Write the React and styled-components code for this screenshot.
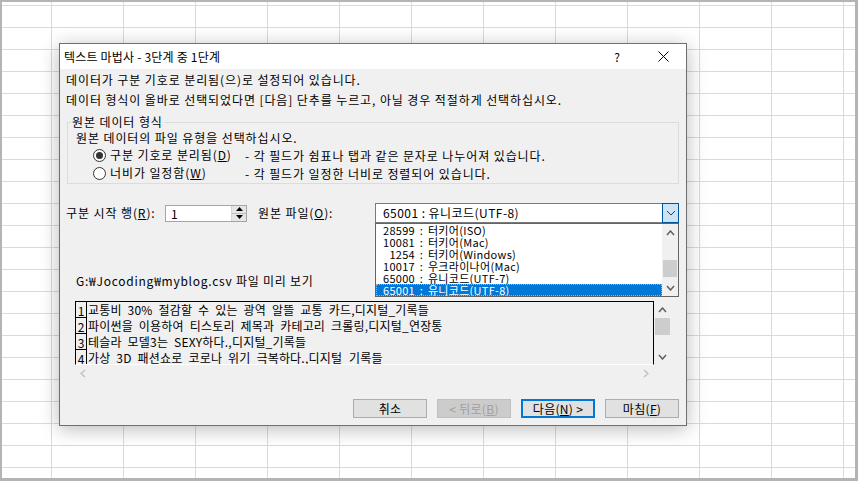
import styled, { createGlobalStyle } from "styled-components";

const GlobalStyle = createGlobalStyle`
  html, body {
    margin: 0;
    padding: 0;
  }
  body {
    font-family: "Noto Sans CJK KR", "Noto Sans", sans-serif;
    font-size: 12px;
    color: #000;
  }
  * {
    box-sizing: border-box;
  }
`

const Screen = styled.div`
  position: relative;
  width: 858px;
  height: 481px;
  overflow: hidden;
  border-style: solid;
  border-color: #b4b4b4;
  border-width: 2px 3px 3px 2px;
  background-color: #fff;
  background-image: linear-gradient(to right, #dadada 1px, transparent 1px),
    linear-gradient(to bottom, #dadada 1px, transparent 1px);
  background-size: 72px 100%, 100% 22px;
  background-position: 49px 0, 0 3px;
`

const Dialog = styled.div`
  position: absolute;
  left: 57px;
  top: 41px;
  width: 628px;
  height: 383px;
  border: 1px solid #6f6f6f;
  background: #f0f0f0;
  box-shadow: 0 3px 18px rgba(0, 0, 0, 0.28);
  display: flex;
  flex-direction: column;
`

const TitleBar = styled.div`
  height: 25px;
  flex-shrink: 0;
  background: #fff;
  display: flex;
  align-items: center;
  padding-left: 4px;
`

const Title = styled.div`
  flex: 1;
  line-height: 16px;
  letter-spacing: 0.2px;
`

const TitleButton = styled.div`
  width: 46px;
  height: 25px;
  display: flex;
  align-items: center;
  justify-content: center;
  font-size: 12px;
`

const Body = styled.div`
  flex: 1;
  display: flex;
  flex-direction: column;
  padding: 1px 7px 0 6px;
  letter-spacing: 0.9px;
`

const Line = styled.div`
  line-height: 20px;
  white-space: nowrap;
`

const Group = styled.fieldset`
  margin: 4px 0 0 1px;
  width: 612px;
  min-width: 0;
  padding: 0 8px 1px 8px;
  border: 1px solid #dcdcdc;
`

const Legend = styled.legend`
  margin-left: -5px;
  padding: 0 1px;
  line-height: 16px;
`

const GroupText = styled.div`
  line-height: 16px;
`

const RadioRow = styled.div`
  display: flex;
  align-items: center;
  height: 18px;
  padding-left: 17px;
  white-space: nowrap;
`

const Radio = styled.span`
  position: relative;
  width: 13px;
  height: 13px;
  border-radius: 50%;
  border: 1px solid #333;
  background: #fff;
  margin-right: 4px;
  flex-shrink: 0;
  &::after {
    content: "";
    display: ${(p) => (p.$checked ? "block" : "none")};
    position: absolute;
    left: 2px;
    top: 2px;
    width: 7px;
    height: 7px;
    border-radius: 50%;
    background: #333;
  }
`

const RadioLabel = styled.span`
  width: 135px;
  line-height: 16px;
`

const OptionsRow = styled.div`
  display: flex;
  align-items: center;
  height: 20px;
  margin-top: 19px;
  white-space: nowrap;
`

const FieldLabel = styled.span`
  width: ${(p) => p.$width}px;
  margin-left: ${(p) => p.$offset || 0}px;
  line-height: 16px;
`

const Spin = styled.div`
  width: 82px;
  height: 17px;
  border: 1px solid #a5a5a5;
  background: #fff;
  display: flex;
  align-items: stretch;
`

const SpinValue = styled.div`
  flex: 1;
  padding-left: 5px;
  line-height: 15px;
`

const SpinButtons = styled.div`
  width: 15px;
  display: flex;
  flex-direction: column;
  background: #e6e6e6;
  border-left: 1px solid #d4d4d4;
`

const SpinButton = styled.div`
  flex: 1;
  display: flex;
  align-items: center;
  justify-content: center;
  & + & {
    border-top: 1px solid #bdbdbd;
  }
`

const Combo = styled.div`
  position: relative;
  width: 304px;
  height: 20px;
  border: 1px solid #7a7a7a;
  background: #fff;
  display: flex;
  align-items: stretch;
`

const ComboValue = styled.div`
  flex: 1;
  padding-left: 7px;
  line-height: 18px;
  letter-spacing: 0.45px;
`

const DropButton = styled.div`
  width: 17px;
  margin: -1px -1px -1px 0;
  border: 1px solid #005499;
  background: #cce4f7;
  display: flex;
  align-items: center;
  justify-content: center;
`

const DropList = styled.div`
  position: absolute;
  left: -1px;
  top: 19px;
  width: 304px;
  height: 74px;
  border: 1px solid #646464;
  background: #fff;
  display: flex;
  z-index: 2;
`

const ListItems = styled.div`
  flex: 1;
  display: flex;
  flex-direction: column;
  overflow: hidden;
`

const ListItem = styled.div`
  height: 12px;
  line-height: 12px;
  padding-left: 7px;
  font-size: 11px;
  white-space: pre;
  letter-spacing: 0.3px;
  word-spacing: 2px;
  color: ${(p) => (p.$selected ? "#fff" : "#000")};
  background: ${(p) => (p.$selected ? "#0078d7" : "transparent")};
  outline: ${(p) => (p.$selected ? "1px dotted #f29a5c" : "none")};
  outline-offset: -1px;
`

const VScroll = styled.div`
  width: ${(p) => p.$width || 16}px;
  background: #f0f0f0;
  display: flex;
  flex-direction: column;
  align-items: center;
`

const ScrollArrow = styled.div`
  height: ${(p) => p.$height || 16}px;
  width: 100%;
  display: flex;
  align-items: center;
  justify-content: center;
  flex-shrink: 0;
`

const ScrollTrack = styled.div`
  flex: 1;
  width: 100%;
  padding-top: ${(p) => p.$thumbTop}px;
`

const Thumb = styled.div`
  height: ${(p) => p.$height}px;
  margin: 0 1px;
  background: #cdcdcd;
`

const PreviewLabel = styled.div`
  margin-top: 50px;
  padding-left: 10px;
  line-height: 16px;
  letter-spacing: 0.75px;
`

const Preview = styled.div`
  margin: 12px 0 0 9px;
  display: grid;
  grid-template-columns: 579px 17px;
  grid-template-rows: 64px 16px;
  width: 596px;
  letter-spacing: 0;
`

const PreviewFrame = styled.div`
  border-top: 1px solid #000;
  border-left: 1px solid #000;
  border-right: 1px solid #000;
  border-bottom: 1px solid #fff;
  overflow: hidden;
`

const PreviewRow = styled.div`
  display: flex;
  height: 16px;
  white-space: nowrap;
`

const RowNumber = styled.div`
  width: 11px;
  flex-shrink: 0;
  border-right: 1px solid #000;
  border-bottom: 1px solid #000;
  text-align: center;
  line-height: 17px;
  font-size: 12px;
`

const RowText = styled.div`
  padding-left: 1px;
  line-height: 16px;
  letter-spacing: 0.2px;
  word-spacing: 3px;
`

const HScroll = styled.div`
  display: flex;
  justify-content: space-between;
  align-items: center;
`

const HArrow = styled.div`
  width: 16px;
  height: 16px;
  display: flex;
  align-items: center;
  justify-content: center;
`

const ButtonRow = styled.div`
  display: flex;
  justify-content: flex-end;
  gap: 10px;
  margin-top: 18px;
`

const Button = styled.div`
  width: 74px;
  height: 19px;
  display: flex;
  align-items: center;
  justify-content: center;
  letter-spacing: 0.3px;
  background: ${(p) => (p.$disabled ? "#cccccc" : "#e1e1e1")};
  color: ${(p) => (p.$disabled ? "#a0a0a0" : "#000")};
  border: ${(p) =>
    p.$default
      ? "2px solid #0078d7"
      : p.$disabled
      ? "1px solid #bfbfbf"
      : "1px solid #adadad"};
  white-space: pre;
`

const Chevron = ({ dir = "down", color = "#606060", w = 9, h = 6, sw = 1.5 }) => {
  const paths = {
    up: `M1 ${h - 1} L${w / 2} 1 L${w - 1} ${h - 1}`,
    down: `M1 1 L${w / 2} ${h - 1} L${w - 1} 1`,
    left: `M${w - 1} 1 L1 ${h / 2} L${w - 1} ${h - 1}`,
    right: `M1 1 L${w - 1} ${h / 2} L1 ${h - 1}`,
  };
  return (
    <svg width={w} height={h} viewBox={`0 0 ${w} ${h}`}>
      <path d={paths[dir]} fill="none" stroke={color} strokeWidth={sw} />
    </svg>
  );
};

const Triangle = ({ up }) => (
  <svg width="7" height="4" viewBox="0 0 7 4">
    <path d={up ? "M0 4 L3.5 0 L7 4 Z" : "M0 0 L3.5 4 L7 0 Z"} fill="#000" />
  </svg>
);

const encodings = [
  { label: "28599 : 터키어(ISO)" },
  { label: "10081 : 터키어(Mac)" },
  { label: "\u20071254 : 터키어(Windows)" },
  { label: "10017 : 우크라이나어(Mac)" },
  { label: "65000 : 유니코드(UTF-7)" },
  { label: "65001 : 유니코드(UTF-8)", selected: true },
];

const rows = [
  "교통비 30% 절감할 수 있는 광역 알뜰 교통 카드,디지털_기록들",
  "파이썬을 이용하여 티스토리 제목과 카테고리 크롤링,디지털_연장통",
  "테슬라 모델3는 SEXY하다.,디지털_기록들",
  "가상 3D 패션쇼로 코로나 위기 극복하다.,디지털_기록들",
];

export default function App() {
  return (
    <>
      <GlobalStyle />
      <Screen>
        <Dialog>
          <TitleBar>
            <Title>텍스트 마법사 - 3단계 중 1단계</Title>
            <TitleButton>?</TitleButton>
            <TitleButton>
              <svg width="11" height="11" viewBox="0 0 11 11">
                <path d="M0.5 0.5 L10.5 10.5 M10.5 0.5 L0.5 10.5" stroke="#000" strokeWidth="1" />
              </svg>
            </TitleButton>
          </TitleBar>
          <Body>
            <Line>데이터가 구분 기호로 분리됨(으)로 설정되어 있습니다.</Line>
            <Line>데이터 형식이 올바로 선택되었다면 [다음] 단추를 누르고, 아닐 경우 적절하게 선택하십시오.</Line>
            <Group>
              <Legend>원본 데이터 형식</Legend>
              <GroupText>원본 데이터의 파일 유형을 선택하십시오.</GroupText>
              <RadioRow>
                <Radio $checked />
                <RadioLabel>
                  구분 기호로 분리됨(<u>D</u>)
                </RadioLabel>
                <span>- 각 필드가 쉼표나 탭과 같은 문자로 나누어져 있습니다.</span>
              </RadioRow>
              <RadioRow>
                <Radio />
                <RadioLabel>
                  너비가 일정함(<u>W</u>)
                </RadioLabel>
                <span>- 각 필드가 일정한 너비로 정렬되어 있습니다.</span>
              </RadioRow>
            </Group>
            <OptionsRow>
              <FieldLabel $width={99}>
                구분 시작 행(<u>R</u>):
              </FieldLabel>
              <Spin>
                <SpinValue>1</SpinValue>
                <SpinButtons>
                  <SpinButton>
                    <Triangle up />
                  </SpinButton>
                  <SpinButton>
                    <Triangle />
                  </SpinButton>
                </SpinButtons>
              </Spin>
              <FieldLabel $width={117} $offset={11}>
                원본 파일(<u>O</u>):
              </FieldLabel>
              <Combo>
                <ComboValue>65001 : 유니코드(UTF-8)</ComboValue>
                <DropButton>
                  <Chevron dir="down" color="#3c3c3c" w={10} h={6} sw={1} />
                </DropButton>
                <DropList>
                  <ListItems>
                    {encodings.map((e) => (
                      <ListItem key={e.label} $selected={e.selected}>
                        {e.label}
                      </ListItem>
                    ))}
                  </ListItems>
                  <VScroll $width={16}>
                    <ScrollArrow $height={17}>
                      <Chevron dir="up" />
                    </ScrollArrow>
                    <ScrollTrack $thumbTop={19}>
                      <Thumb $height={17} />
                    </ScrollTrack>
                    <ScrollArrow $height={17}>
                      <Chevron dir="down" />
                    </ScrollArrow>
                  </VScroll>
                </DropList>
              </Combo>
            </OptionsRow>
            <PreviewLabel>G:₩Jocoding₩myblog.csv 파일 미리 보기</PreviewLabel>
            <Preview>
              <PreviewFrame>
                {rows.map((text, i) => (
                  <PreviewRow key={i}>
                    <RowNumber>{i + 1}</RowNumber>
                    <RowText>{text}</RowText>
                  </PreviewRow>
                ))}
              </PreviewFrame>
              <VScroll $width={17}>
                <ScrollArrow $height={17}>
                  <Chevron dir="up" />
                </ScrollArrow>
                <ScrollTrack $thumbTop={0}>
                  <Thumb $height={17} />
                </ScrollTrack>
                <ScrollArrow $height={17}>
                  <Chevron dir="down" />
                </ScrollArrow>
              </VScroll>
              <HScroll>
                <HArrow>
                  <Chevron dir="left" color="#c2c2c2" w={6} h={9} />
                </HArrow>
                <HArrow>
                  <Chevron dir="right" color="#c2c2c2" w={6} h={9} />
                </HArrow>
              </HScroll>
            </Preview>
            <ButtonRow>
              <Button>취소</Button>
              <Button $disabled>
                {"< 뒤로("}
                <u>B</u>)
              </Button>
              <Button $default>
                다음(<u>N</u>) {">"}
              </Button>
              <Button>
                마침(<u>F</u>)
              </Button>
            </ButtonRow>
          </Body>
        </Dialog>
      </Screen>
    </>
  );
}
